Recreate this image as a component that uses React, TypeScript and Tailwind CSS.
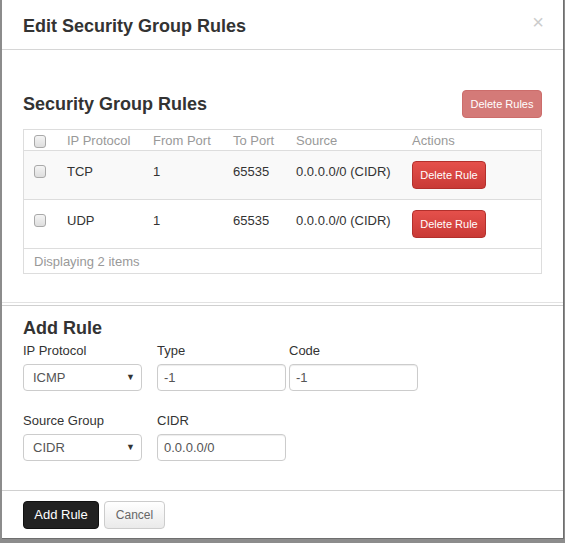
type Rule = { id: number; proto: string; from: string; to: string; source: string };

const rules: Rule[] = [
  { id: 1, proto: "TCP", from: "1", to: "65535", source: "0.0.0.0/0 (CIDR)" },
  { id: 2, proto: "UDP", from: "1", to: "65535", source: "0.0.0.0/0 (CIDR)" },
];

function Check() {
  return <span className="block w-[12px] h-[13px] rounded-[3px] border border-[#a9a9a9] bg-gradient-to-b from-[#f4f4f4] to-[#dedede]" />;
}

function Select({ value }: { value: string }) {
  return (
    <div className="w-[119px] h-[27px] rounded-[4px] border border-[#ccc] bg-white flex items-center justify-between pl-[9px] pr-[6px] text-[13px] text-[#555]">
      <span>{value}</span>
      <span className="text-[9px] text-[#333]">▼</span>
    </div>
  );
}

function Input({ value }: { value: string }) {
  return (
    <div className="w-[129px] h-[27px] rounded-[4px] border border-[#ccc] bg-white flex items-center px-[6px] text-[13px] text-[#555] shadow-[inset_0_1px_1px_rgba(0,0,0,0.075)]">
      {value}
    </div>
  );
}

export default function App() {
  return (
    <div className="w-[565px] h-[543px] bg-[#8c8c8c] overflow-hidden font-['Liberation_Sans',Arial,sans-serif] text-[#333]">
      <div className="ml-[2px] w-[562px] h-[539px] bg-white border-r border-b border-[#6f6f6f] flex flex-col">
        <div className="h-[50px] border-b border-[#d6d6d6] flex items-center justify-between pl-[21px] pr-[19px] pt-[3px]">
          <h2 className="text-[18px] font-bold">Edit Security Group Rules</h2>
          <span className="text-[20px] text-[#ccc] leading-none -mt-[8px]">×</span>
        </div>

        <div className="px-[21px] pt-[40px]">
          <div className="flex items-center justify-between h-[28px]">
            <h3 className="text-[18px] font-bold">Security Group Rules</h3>
            <button className="w-[80px] h-[28px] rounded-[4px] bg-[#d47a78] text-white text-[11px] border border-[#cc6d6b]">Delete Rules</button>
          </div>

          <div className="mt-[11px] border border-[#ddd] text-[13px]">
            <div className="h-[21px] flex items-center text-[#999] border-b border-[#ddd] pt-[2px]">
              <div className="w-[43px] pl-[10px]"><Check /></div>
              <div className="w-[86px]">IP Protocol</div>
              <div className="w-[80px]">From Port</div>
              <div className="w-[63px]">To Port</div>
              <div className="w-[116px]">Source</div>
              <div>Actions</div>
            </div>
            {rules.map((r, i) => (
              <div key={r.id} className={`h-[49px] flex items-center border-b border-[#ddd] ${i === 0 ? "bg-[#f9f9f9]" : "bg-white"}`}>
                <div className="w-[43px] pl-[10px] mb-[7px]"><Check /></div>
                <div className="w-[86px] mb-[7px]">{r.proto}</div>
                <div className="w-[80px] mb-[7px]">{r.from}</div>
                <div className="w-[63px] mb-[7px]">{r.to}</div>
                <div className="w-[116px] mb-[7px]">{r.source}</div>
                <div>
                  <button className="w-[74px] h-[28px] rounded-[4px] bg-gradient-to-b from-[#e5504b] to-[#c93a36] border border-[#b3302c] text-white text-[11px]">Delete Rule</button>
                </div>
              </div>
            ))}
            <div className="h-[24px] flex items-center pl-[10px] pt-[2px] text-[#999]">Displaying 2 items</div>
          </div>
        </div>

        <div className="mt-[28px] border-t border-[#e2e2e2] h-[4px] border-b border-b-[#d0d0d0]" />

        <div className="px-[21px] pt-[11px] h-[184px]">
          <h3 className="text-[18px] font-bold leading-[22px]">Add Rule</h3>
          <div className="flex mt-[2px] text-[13px]">
            <div className="w-[134px]">
              <div className="h-[23px] leading-[20px]">IP Protocol</div>
              <Select value="ICMP" />
            </div>
            <div className="w-[132px]">
              <div className="h-[23px] leading-[20px]">Type</div>
              <Input value="-1" />
            </div>
            <div>
              <div className="h-[23px] leading-[20px]">Code</div>
              <Input value="-1" />
            </div>
          </div>
          <div className="flex mt-[20px] text-[13px]">
            <div className="w-[134px]">
              <div className="h-[23px] leading-[20px]">Source Group</div>
              <Select value="CIDR" />
            </div>
            <div>
              <div className="h-[23px] leading-[20px]">CIDR</div>
              <Input value="0.0.0.0/0" />
            </div>
          </div>
        </div>

        <div className="border-t border-[#d0d0d0] flex-1 flex items-start gap-[5px] px-[21px] pt-[10px]">
          <button className="w-[76px] h-[28px] rounded-[4px] bg-[#222] border border-[#111] text-white text-[13px]">Add Rule</button>
          <button className="w-[61px] h-[28px] rounded-[4px] bg-gradient-to-b from-white to-[#eaeaea] border border-[#ccc] text-[#666] text-[12px]">Cancel</button>
        </div>
      </div>
    </div>
  );
}
